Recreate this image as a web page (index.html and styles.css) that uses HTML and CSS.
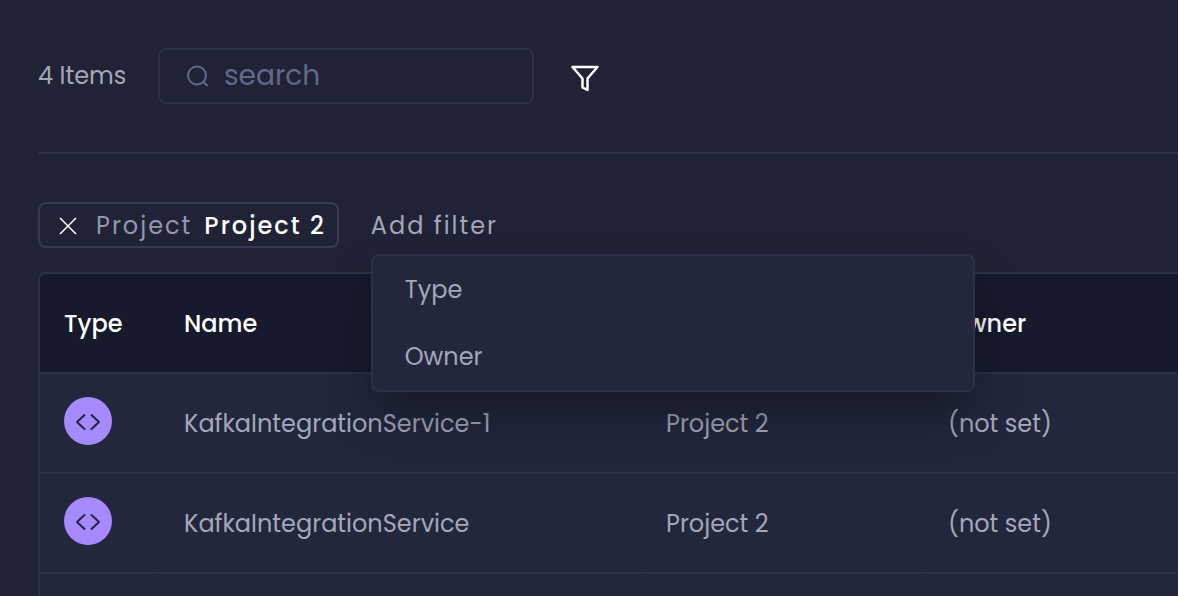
FILE: index.html
```html
<!DOCTYPE html>
<html lang="en">
<head>
<meta charset="utf-8">
<meta name="viewport" content="width=device-width, initial-scale=1">
<title>Items</title>
<link rel="stylesheet" href="styles.css">
</head>
<body>
<main class="page">
  <header class="toolbar">
    <span class="count">4 Items</span>
    <label class="search">
      <svg class="search-icon" viewBox="0 0 24 24" aria-hidden="true"><circle cx="11" cy="11.500" r="9"/><path d="M17.500 18 21.500 22"/></svg>
      <input class="search-input" type="search" placeholder="search" aria-label="Search">
    </label>
    <button class="icon-button" type="button" aria-label="Filter">
      <svg class="funnel" viewBox="0 0 30 28" aria-hidden="true"><path d="M2.500 3H27.500L17.500 14.500V26L12.500 23.500V14.500Z"/></svg>
    </button>
  </header>

  <section class="filters">
    <div class="chip">
      <button class="chip-remove" type="button" aria-label="Remove filter">
        <svg class="cross" viewBox="0 0 18 18" aria-hidden="true"><path d="M1 1 17 17M17 1 1 17"/></svg>
      </button>
      <span class="chip-key">Project</span>
      <span class="chip-value">Project 2</span>
    </div>
    <div class="add">
      <button class="add-button" type="button">Add filter</button>
      <div class="menu">
        <button class="menu-item" type="button">Type</button>
        <button class="menu-item" type="button">Owner</button>
      </div>
    </div>
  </section>

  <section class="table-frame">
    <table class="table">
      <colgroup><col class="col-type"><col class="col-name"><col class="col-project"><col></colgroup>
      <thead>
        <tr><th>Type</th><th>Name</th><th>Project</th><th>Owner</th></tr>
      </thead>
      <tbody>
        <tr>
          <td><span class="badge"><svg class="code" viewBox="0 0 26 18" aria-hidden="true"><path d="M9.500 2 2 9l7.500 7M16.500 2 24 9l-7.500 7"/></svg></span></td>
          <td>KafkaIntegrationService-1</td><td>Project 2</td><td>(not set)</td>
        </tr>
        <tr>
          <td><span class="badge"><svg class="code" viewBox="0 0 26 18" aria-hidden="true"><path d="M9.500 2 2 9l7.500 7M16.500 2 24 9l-7.500 7"/></svg></span></td>
          <td>KafkaIntegrationService</td><td>Project 2</td><td>(not set)</td>
        </tr>
      </tbody>
    </table>
  </section>
</main>
</body>
</html>
```

FILE: styles.css
```css
* { box-sizing: border-box; }

body {
  margin: 0;
  background: #202335;
  color: #a4a7b9;
  font: 24px/36px Poppins, Inter, sans-serif;
}

button, input {
  font: inherit;
  color: inherit;
  background: none;
  border: 0;
  padding: 0;
  margin: 0;
}

button { cursor: pointer; }

svg {
  display: block;
  fill: none;
  stroke: currentColor;
}

.page {
  display: flex;
  flex-direction: column;
  height: 100vh;
  padding: 48px 0 0 38px;
  overflow: hidden;
}

.toolbar {
  display: flex;
  align-items: center;
  padding-bottom: 48px;
  border-bottom: 2px solid #2d3148;
}

.count { width: 120px; }

.search {
  display: flex;
  align-items: center;
  gap: 14px;
  width: 376px;
  height: 56px;
  padding: 0 26px;
  border: 2px solid #2d3148;
  border-radius: 8px;
}

.search-icon {
  flex: none;
  width: 24px;
  height: 24px;
  color: #63688a;
  stroke-width: 2;
}

.search-input {
  flex: 1;
  min-width: 0;
  font-size: 28px;
  outline: 0;
}

.search-input::placeholder { color: #63688a; opacity: 1; }

.icon-button { padding-top: 4px; margin-left: 36px; color: #fff; }

.funnel { width: 30px; height: 28px; stroke-width: 2.5; stroke-linejoin: round; }

.filters {
  display: flex;
  align-items: center;
  gap: 32px;
  padding: 48px 0 24px;
  letter-spacing: 2px;
}

.chip {
  display: flex;
  align-items: center;
  height: 46px;
  padding: 2px 11px 0 19px;
  border: 2px solid #363a53;
  border-radius: 8px;
}

.chip-remove { margin-right: 19px; color: #fff; }

.cross { width: 18px; height: 18px; stroke-width: 1.5; }

.chip-key { margin-right: 12px; color: #9497ad; }

.chip-value { color: #fff; font-weight: 500; }

.add { position: relative; padding-top: 2px; }

.add-button { display: block; letter-spacing: inherit; }

.menu {
  position: absolute;
  top: 48px;
  left: 0;
  z-index: 1;
  width: 604px;
  background: #22273b;
  border: 2px solid #2d3148;
  border-radius: 8px;
  box-shadow: 0 24px 48px -8px rgba(10, 12, 20, 0.6);
  letter-spacing: normal;
}

.menu-item {
  display: block;
  width: 100%;
  height: 67px;
  padding: 0 32px;
  text-align: left;
}

.table-frame {
  flex: 1;
  background: #22273b;
  border: 2px solid #2d3148;
  border-width: 2px 0 0 2px;
  border-radius: 8px 0 0 0;
  overflow: hidden;
}

.table {
  width: 100%;
  table-layout: fixed;
  border-collapse: separate;
  border-spacing: 0;
}

.col-type { width: 120px; }
.col-name { width: 482px; }
.col-project { width: 282px; }

th, td {
  height: 100px;
  padding: 2px 0 0 24px;
  text-align: left;
  vertical-align: middle;
  border-right: 1px solid #22273b;
  border-bottom: 2px solid #2d3148;
}

th {
  background: #161a2c;
  border-right-color: #161a2c;
  color: #fff;
  font-weight: 500;
}

.badge {
  display: flex;
  align-items: center;
  justify-content: center;
  width: 48px;
  height: 48px;
  margin-bottom: 6px;
  border-radius: 50%;
  background: #a688ff;
  color: #22273b;
}

.code { width: 26px; height: 18px; margin-top: 2px; stroke-width: 2; stroke-linecap: round; stroke-linejoin: round; }
```
